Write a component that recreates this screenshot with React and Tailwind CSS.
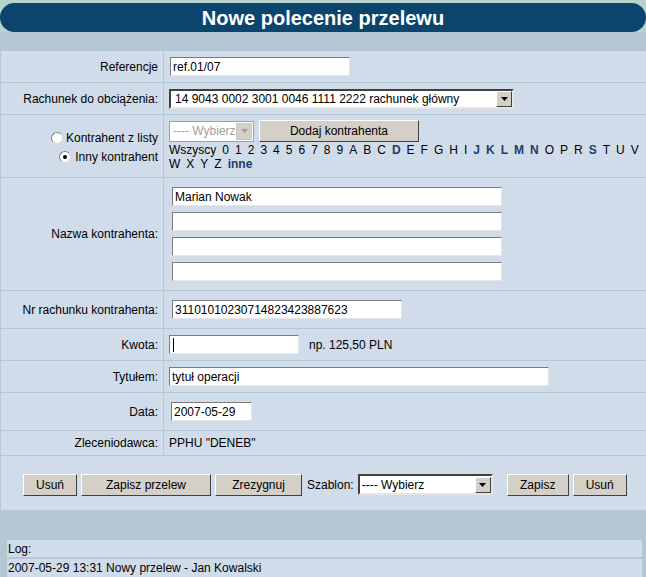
import React from "react";

const inputCls =
  "h-[19px] bg-white border border-t-[#7a7a7a] border-l-[#7a7a7a] border-b-[#e6e6e6] border-r-[#e6e6e6] flex items-center pl-[2px] text-[12px] text-black leading-none";

function Arrow({ disabled }) {
  return (
    <div className="w-[16px] h-[16px] bg-[#d4d0c8] border border-t-white border-l-white border-b-[#404040] border-r-[#404040] flex items-center justify-center shrink-0">
      <svg width="7" height="4" viewBox="0 0 7 4">
        <polygon points="0,0 7,0 3.5,4" fill={disabled ? "#a0a0a0" : "#000"} />
      </svg>
    </div>
  );
}

function Btn({ children, w }) {
  return (
    <div
      className={`${w} h-[22px] bg-[#d4d0c8] border border-t-white border-l-white border-b-[#404040] border-r-[#404040] flex items-center justify-center text-[12px] text-black shrink-0`}
    >
      {children}
    </div>
  );
}

function Row({ label, h, children, labelCls = "" }) {
  return (
    <div className={`flex gap-px ${h}`}>
      <div className={`w-[162px] shrink-0 bg-[#d1dceb] flex items-center justify-end pr-[5px] ${labelCls}`}>
        {label}
      </div>
      <div className="flex-1 bg-[#d1dceb] flex items-center pl-[5px]">{children}</div>
    </div>
  );
}

const letters1 = [
  ["Wszyscy", 0], ["0", 0], ["1", 0], ["2", 0], ["3", 0], ["4", 0], ["5", 0], ["6", 0], ["7", 0], ["8", 0], ["9", 0],
  ["A", 0], ["B", 0], ["C", 0], ["D", 1], ["E", 0], ["F", 0], ["G", 0], ["H", 0], ["I", 0], ["J", 1], ["K", 1], ["L", 1],
  ["M", 1], ["N", 1], ["O", 0], ["P", 0], ["R", 0], ["S", 1], ["T", 0], ["U", 0], ["V", 0],
];
const letters2 = [["W", 0], ["X", 0], ["Y", 0], ["Z", 0], ["inne", 1]];

function Letter({ t, b }) {
  return <span className={b ? "font-bold text-[#1c3d6e]" : "text-black"}>{t}</span>;
}

function Radio({ checked }) {
  return (
    <div className="w-[12px] h-[12px] rounded-full bg-white border border-t-[#808080] border-l-[#808080] border-b-[#d8d8d8] border-r-[#d8d8d8] flex items-center justify-center shrink-0">
      {checked && <div className="w-[4px] h-[4px] rounded-full bg-black" />}
    </div>
  );
}

export default function App() {
  return (
    <div
      className="w-[646px] h-[577px] bg-[#b5c7d5] text-[12px] text-black overflow-hidden"
      style={{ fontFamily: '"Liberation Sans", Arial, sans-serif' }}
    >
      <div className="h-[32px] bg-[#b8d2cd] pt-[3px]">
        <div className="h-[29px] rounded-full bg-[#0b456e] flex items-center justify-center text-white font-bold text-[20px]">
          Nowe polecenie przelewu
        </div>
      </div>

      <div className="mt-[19px] pl-px flex flex-col gap-px">
        <Row label="Referencje" h="h-[31px]">
          <div className={`${inputCls} w-[180px] ml-[1px]`}>ref.01/07</div>
        </Row>
        <Row label="Rachunek do obciążenia:" h="h-[31px]">
          <div className="w-[345px] h-[20px] bg-white border-2 border-t-[#404040] border-l-[#404040] border-b-[#e6e6e6] border-r-[#e6e6e6] flex items-center justify-between pl-[4px] pr-[0px]">
            <span>14 9043 0002 3001 0046 1111 2222 rachunek główny</span>
            <Arrow />
          </div>
        </Row>
        <div className="flex gap-px h-[62px]">
          <div className="w-[162px] shrink-0 bg-[#d1dceb] flex flex-col items-end justify-center pr-[5px] gap-[5px] pt-[3px]">
            <div className="flex items-center gap-[3px] h-[14px]">
              <Radio />
              <span>Kontrahent z listy</span>
            </div>
            <div className="flex items-center gap-[4px] h-[14px]">
              <Radio checked />
              <span>Inny kontrahent</span>
            </div>
          </div>
          <div className="flex-1 bg-[#d1dceb] flex flex-col pl-[5px] pt-[5px]">
            <div className="flex items-center gap-[5px] h-[22px]">
              <div className="w-[85px] h-[21px] bg-white border border-[#a0a0a0] flex items-center justify-between pl-[3px] pr-[1px] overflow-hidden">
                <span className="text-[#a0a0a0] whitespace-nowrap">---- Wybierz</span>
                <div className="w-[16px] h-[17px] bg-[#d4d0c8] border border-[#c8c8c8] flex items-center justify-center shrink-0">
                  <svg width="7" height="4" viewBox="0 0 7 4">
                    <polygon points="0,0 7,0 3.5,4" fill="#a0a0a0" />
                  </svg>
                </div>
              </div>
              <Btn w="w-[160px]">Dodaj kontrahenta</Btn>
            </div>
            <div className="flex gap-x-[6px] h-[14px] items-center mt-[1px] whitespace-nowrap">
              {letters1.map(([t, b]) => (
                <Letter key={t} t={t} b={b} />
              ))}
            </div>
            <div className="flex gap-x-[6px] h-[14px] items-center whitespace-nowrap">
              {letters2.map(([t, b]) => (
                <Letter key={t} t={t} b={b} />
              ))}
            </div>
          </div>
        </div>
        <div className="flex gap-px h-[112px]">
          <div className="w-[162px] shrink-0 bg-[#d1dceb] flex items-center justify-end pr-[5px]">
            Nazwa kontrahenta:
          </div>
          <div className="flex-1 bg-[#d1dceb] flex flex-col justify-center gap-[6px] pl-[8px]">
            <div className={`${inputCls} w-[330px]`}>Marian Nowak</div>
            <div className={`${inputCls} w-[330px]`}></div>
            <div className={`${inputCls} w-[330px]`}></div>
            <div className={`${inputCls} w-[330px]`}></div>
          </div>
        </div>
        <Row label="Nr rachunku kontrahenta:" h="h-[37px]">
          <div className={`${inputCls} w-[230px] ml-[3px]`}>31101010230714823423887623</div>
        </Row>
        <Row label="Kwota:" h="h-[31px]">
          <div className={`${inputCls} w-[130px]`}>
            <div className="w-px h-[14px] bg-black ml-[1px]" />
          </div>
          <span className="ml-[10px]">np. 125,50 PLN</span>
        </Row>
        <Row label="Tytułem:" h="h-[31px]">
          <div className={`${inputCls} w-[380px]`}>tytuł operacji</div>
        </Row>
        <Row label="Data:" h="h-[37px]">
          <div className={`${inputCls} w-[81px] ml-[2px]`}>2007-05-29</div>
        </Row>
        <Row label="Zleceniodawca:" h="h-[24px]">
          <span>PPHU "DENEB"</span>
        </Row>
        <div className="h-[54px] bg-[#d1dceb] flex items-center pl-[22px] pt-[3px]">
          <Btn w="w-[54px]">Usuń</Btn>
          <div className="w-[4px]" />
          <Btn w="w-[130px]">Zapisz przelew</Btn>
          <div className="w-[4px]" />
          <Btn w="w-[87px]">Zrezygnuj</Btn>
          <span className="ml-[5px] mr-[4px]">Szablon:</span>
          <div className="w-[135px] h-[21px] bg-white border-2 border-t-[#404040] border-l-[#404040] border-b-[#e6e6e6] border-r-[#e6e6e6] flex items-center justify-between pl-[2px]">
            <span>---- Wybierz</span>
            <Arrow />
          </div>
          <div className="w-[14px]" />
          <Btn w="w-[62px]">Zapisz</Btn>
          <div className="w-[4px]" />
          <Btn w="w-[54px]">Usuń</Btn>
        </div>
      </div>

      <div className="mt-[30px] pl-[7px] pr-[4px] flex flex-col gap-[2px]">
        <div className="h-[17px] bg-[#d1dceb] flex items-center pl-[1px]">Log:</div>
        <div className="h-[18px] bg-[#d1dceb] flex items-center pl-[1px]">2007-05-29 13:31 Nowy przelew - Jan Kowalski</div>
      </div>
    </div>
  );
}
